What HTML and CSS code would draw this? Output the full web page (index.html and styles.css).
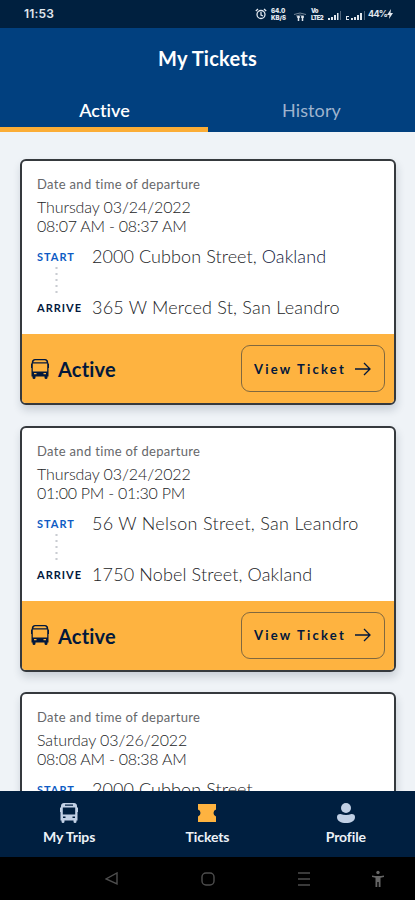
FILE: index.html
```html
<!DOCTYPE html>
<html lang="en">
<head>
<meta charset="utf-8">
<title>My Tickets</title>
<link rel="stylesheet" href="styles.css">
</head>
<body>
<svg width="0" height="0" class="defs">
  <symbol id="bus" viewBox="0 0 18 20">
    <path fill="currentColor" fill-rule="evenodd" d="M4 0h10Q17 .3 17 3v1.500h1V9h-.5v8.500H16.500v1q0 1.500-1.500 1.500t-1.500-1.500v-1h-9v1Q4.500 20 3 20t-1.500-1.500v-1H.5V9H0V4.500h1V3Q1 .3 4 0ZM5 1.600v1.100h8V1.600ZM2.800 4.600v6.900h12.400V4.600ZM3 13.600v1.500h2.500v-1.500ZM12.500 13.600v1.500H15v-1.500Z"/>
  </symbol>
  <symbol id="bus-line" viewBox="0 0 18 20">
    <path fill="currentColor" fill-rule="evenodd" d="M4 0h10Q17 .3 17.200 3v1.500H18V9h-.5v8.500H16.500v1q0 1.500-1.500 1.500t-1.500-1.500v-1h-9v1Q4.500 20 3 20t-1.500-1.500v-1H.5V9H0V4.500h.8V3Q1 .3 4 0ZM4 1.300Q2.500 1.600 2.300 3.200h13.400Q15.500 1.600 14 1.300ZM1.800 4.400v8h14.400v-8ZM3 14v1.200h2.500V14ZM12.500 14v1.200H15V14Z"/>
  </symbol>
  <symbol id="arrow" viewBox="0 0 16 14">
    <path fill="none" stroke="currentColor" stroke-width="1.300" d="M0 7h15M9 1l6 6-6 6"/>
  </symbol>
</svg>
<div class="status">
  <span class="clock">11:53</span>
  <div class="indicators">
    <svg width="12" height="12" viewBox="0 0 12 12" fill="none" stroke="currentColor" stroke-width="1.300"><circle cx="6" cy="6.500" r="4"/><path d="M6 4v3l2 1M.8 3 3 1M11.200 3 9 1"/></svg>
    <span class="speed"><b>64.0</b><b>KB/S</b></span>
    <svg class="wifi" width="12" height="9" viewBox="0 0 12 9" fill="none" stroke="currentColor"><path opacity=".5" d="M0 2.500Q6-.5 12 2.500M2 4q4-2 8 0"/><path stroke-width="1.500" d="M4.500 4v5M8.500 4v5M3 5h3M7 5h3"/></svg>
    <span class="volte"><b>Vo</b><b>LTE2</b></span>
    <svg class="signal" width="13" height="9" viewBox="0 0 13 9" fill="currentColor"><path d="M0 7h2v2H0ZM3 6h2v3H3ZM6 4h2v5H6ZM9 2h1.500v7H9Z"/><path opacity=".35" d="M12 0h1v9h-1Z"/></svg>
    <svg class="signal two" width="19" height="9" viewBox="0 0 19 9" fill="currentColor"><path d="M0 5h3v1H1v2h2v1H0ZM5 7h2v2H5ZM8 6h2v3H8ZM11 4h2v5h-2ZM14 2h2v7h-2Z"/><path opacity=".35" d="M18 0h1v9h-1Z"/></svg>
    <span class="battery">44%</span>
    <svg class="bolt" width="6" height="10" viewBox="0 0 6 10"><path fill="currentColor" d="M4 0 0 6h2.500L2 10 6 4H3.500Z"/></svg>
  </div>
</div>
<header class="header">
  <h1 class="title">My Tickets</h1>
  <nav class="tabs">
    <a class="tab selected">Active</a>
    <a class="tab history">History</a>
  </nav>
</header>
<main class="list">
  <article class="card">
    <div class="info">
      <p class="label">Date and time of departure</p>
      <p class="date">Thursday 03/24/2022</p>
      <p class="date time">08:07 AM - 08:37 AM</p>
      <div class="stop"><span class="tag start">START</span><span class="place a1">2000 Cubbon Street, <span class="city">Oakland</span></span></div>
      <div class="dots"></div>
      <div class="stop"><span class="tag">ARRIVE</span><span class="place a2">365 W Merced St, San Leandro</span></div>
    </div>
    <footer class="foot"><svg class="bus"><use href="#bus-line"/></svg><span class="state">Active</span><a class="view"><span>View Ticket</span><svg class="arrow"><use href="#arrow"/></svg></a></footer>
  </article>
  <article class="card">
    <div class="info">
      <p class="label">Date and time of departure</p>
      <p class="date">Thursday 03/24/2022</p>
      <p class="date time">01:00 PM - 01:30 PM</p>
      <div class="stop"><span class="tag start">START</span><span class="place a3">56 W Nelson Street, San Leandro</span></div>
      <div class="dots"></div>
      <div class="stop"><span class="tag">ARRIVE</span><span class="place a4">1750 Nobel Street, Oakland</span></div>
    </div>
    <footer class="foot"><svg class="bus"><use href="#bus-line"/></svg><span class="state">Active</span><a class="view"><span>View Ticket</span><svg class="arrow"><use href="#arrow"/></svg></a></footer>
  </article>
  <article class="card">
    <div class="info">
      <p class="label">Date and time of departure</p>
      <p class="date">Saturday 03/26/2022</p>
      <p class="date time">08:08 AM - 08:38 AM</p>
      <div class="stop"><span class="tag start">START</span><span class="place a1">2000 Cubbon Street,</span></div>
    </div>
  </article>
</main>
<nav class="bottom">
  <a class="item"><svg width="18" height="20"><use href="#bus"/></svg><span>My Trips</span></a>
  <a class="item current"><svg width="20" height="20" viewBox="0 0 20 20"><path fill="currentColor" d="M1 1h18v5.500q-2.500 .7-2.500 3.500t2.500 3.500V19H1v-5.500Q3.500 12.800 3.500 10T1 6.500Z"/></svg><span>Tickets</span></a>
  <a class="item"><svg width="18" height="20" viewBox="0 0 18 20"><circle cx="9" cy="5" r="5" fill="currentColor"/><path fill="currentColor" d="M3.500 11Q9 13 14.500 11 18 11 18 14c0 4-4 6-9 6s-9-2-9-6q0-3 3.500-3Z"/></svg><span>Profile</span></a>
</nav>
<div class="system">
  <svg width="14" height="14" viewBox="0 0 14 14"><path d="M12 1v11L1 7Z"/></svg>
  <svg width="14" height="14" viewBox="0 0 14 14"><rect x="1" y="1" width="12" height="12" rx="4"/></svg>
  <svg width="14" height="14" viewBox="0 0 14 14"><path d="M1 1h12M1 7h12M1 13h12"/></svg>
  <svg class="access" width="14" height="18" viewBox="0 0 14 18"><circle cx="7" cy="2.500" r="1.700"/><path d="M1 5.500q6 1.200 12 0v1.500L9.500 7.800V17H7.700v-5H6.300v5H4.500V7.800L1 7Z"/></svg>
</div>
</body>
</html>
```
FILE: styles.css
```css
* { box-sizing: border-box; }
body {
  margin: 0;
  width: 415px;
  height: 900px;
  overflow: hidden;
  display: flex;
  flex-direction: column;
  background: #eff3f7;
  font-family: Lato, "Liberation Sans", sans-serif;
  font-variant-ligatures: none;
  color: #02183c;
}
.defs { position: absolute; }
p, h1 { margin: 0; }
svg { display: block; flex: none; }

.status {
  height: 28px;
  flex: none;
  display: flex;
  align-items: center;
  justify-content: space-between;
  padding: 0 22px 0 24px;
  background: #00203f;
  color: #e1e7ee;
}
.clock { font: 600 12px/28px Inter, sans-serif; letter-spacing: 0.2px; }
.indicators { display: flex; align-items: center; }
.speed, .volte {
  display: flex;
  flex-direction: column;
  font: 700 6px/7px Inter, sans-serif;
}
.speed { width: 17px; margin-left: 4px; }
.volte { width: 13px; margin-left: 5px; letter-spacing: -0.6px; }
.wifi { margin: 4px 0 0 6px; }
.signal { margin: 2px 0 0 4px; }
.two { margin-left: 5px; }
.battery { width: 18px; margin-left: 3px; font: 700 9px/12px Inter, sans-serif; letter-spacing: -0.7px; }
.bolt { margin-left: 1px; }

.header { height: 104px; flex: none; background: #01407f; }
.title {
  height: 60px;
  font-size: 20px;
  font-weight: 700;
  line-height: 60px;
  letter-spacing: 0.25px;
  color: #fff;
  text-align: center;
}
.tabs { display: flex; height: 44px; }
.tab { flex: 1; text-align: center; font-size: 18px; line-height: 45px; }
.selected { color: #fff; border-bottom: 5px solid #fbad36; font-weight: 600; padding-left: 1px; }
.history { color: #9fb4ce; letter-spacing: 0.1px; }

.list {
  flex: 1;
  min-height: 0;
  overflow: hidden;
  display: flex;
  flex-direction: column;
  gap: 20.6px;
  padding: 27px 19px 0 20px;
}
.card {
  flex: none;
  height: 246px;
  display: flex;
  flex-direction: column;
  background: #fff;
  border: 2px solid #35393d;
  border-radius: 6px;
  overflow: hidden;
  box-shadow: 1px 5px 8px rgba(30, 45, 65, 0.18);
}
.info { flex: 1; padding: 14px 14px 0 15px; color: #222326; }
.label { font-size: 13px; line-height: 18px; letter-spacing: 0.33px; color: #66676a; }
.date { font-size: 16px; line-height: 19px; font-weight: 300; letter-spacing: -0.1px; }
.time { letter-spacing: -0.25px; }
.label + .date { margin-top: 4px; }
.stop { display: flex; align-items: center; height: 25px; }
.time + .stop { margin-top: 8px; }
.tag { width: 55px; font-size: 11px; font-weight: 700; color: #02183c; letter-spacing: 1px; padding-top: 2px; }
.start { color: #0e5bc4; }
.place { padding-top: 1px; font-size: 18px; line-height: 24px; font-weight: 300; white-space: nowrap; }
.a1 { letter-spacing: 0.08px; }
.a2 { letter-spacing: 0.22px; }
.a3 { letter-spacing: 0.3px; }
.a4 { letter-spacing: 0.13px; }
.city { color: #10183c; }
.dots {
  width: 3px;
  height: 30px;
  margin: -3px 0 -1px 18px;
  background: radial-gradient(circle, #c9ccd1 0.8px, transparent 1.5px) 0 0 / 3px 6px;
}
.foot {
  height: 69px;
  flex: none;
  display: flex;
  align-items: center;
  padding: 0 9px;
  background: #feb340;
}
.bus { width: 18px; height: 20px; }
.state { margin-left: 9px; padding-top: 1px; font-size: 20px; font-weight: 700; letter-spacing: 0.2px; }
.view {
  width: 144px;
  height: 47px;
  margin-left: auto;
  display: flex;
  align-items: center;
  justify-content: space-between;
  padding: 0 13px 0 12px;
  border: 1px solid #80683f;
  border-radius: 9px;
  font-size: 13px;
  font-weight: 700;
  letter-spacing: 2.2px;
}
.arrow { width: 16px; height: 14px; }

.bottom {
  height: 66px;
  flex: none;
  display: flex;
  background: #001f40;
}
.item {
  flex: 1;
  display: flex;
  flex-direction: column;
  align-items: center;
  padding-top: 12px;
  font-size: 14px;
  line-height: 18px;
  font-weight: 700;
  color: #c1d0e5;
}
.item span { margin-top: 5px; color: #edf2f8; letter-spacing: -0.1px; }
.item.current { color: #feb340; }
.system {
  height: 43px;
  flex: none;
  display: flex;
  align-items: center;
  padding: 0 30px 0 105px;
  background: #000;
  fill: none;
  stroke: #4e4e4e;
  stroke-width: 1.4;
}
.system svg + svg { margin-left: 82px; }
.system svg.access { margin-left: 60px; fill: #666; stroke: none; }
```
